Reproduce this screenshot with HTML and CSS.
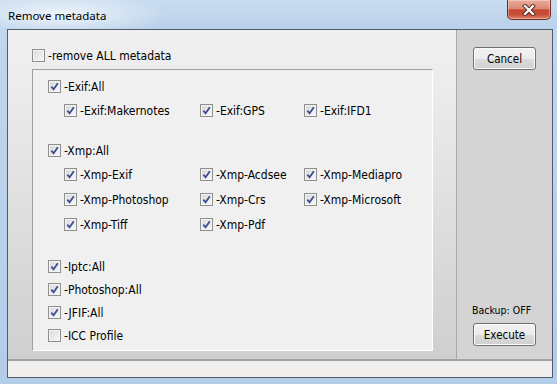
FILE: index.html
```html
<!DOCTYPE html>
<html lang="en">
<head>
    <meta charset="UTF-8">
    <title>Remove metadata</title>
    <link rel="stylesheet" href="styles.css">
</head>
<body>
    <div class="window">
        <div class="titlebar">
            <span class="title">Remove metadata</span>
            <div class="close-btn">
                <svg width="14" height="12" viewBox="0 0 14 12">
                    <path d="M3 2 L11 10 M11 2 L3 10" stroke="#4a2a24" stroke-width="4" stroke-linecap="square"/>
                    <path d="M3 2 L11 10 M11 2 L3 10" stroke="#ffffff" stroke-width="2.2" stroke-linecap="square"/>
                </svg>
            </div>
        </div>
        <div class="frame">
            <div class="client">
                <div class="main">
                    <div class="left-panel">
                        <div class="row top-row"><span class="cb"></span>-remove ALL metadata</div>
                        <div class="group-box">
                            <div class="section">
                                <div class="row"><span class="cb on"><svg viewBox="0 0 9 9"><path d="M1.3 4.6 L3.6 7.2 L7.8 1.2"/></svg></span>-Exif:All</div>
                                <div class="sub">
                                    <div class="row"><span class="cb on"><svg viewBox="0 0 9 9"><path d="M1.3 4.6 L3.6 7.2 L7.8 1.2"/></svg></span>-Exif:Makernotes</div>
                                    <div class="row"><span class="cb on"><svg viewBox="0 0 9 9"><path d="M1.3 4.6 L3.6 7.2 L7.8 1.2"/></svg></span>-Exif:GPS</div>
                                    <div class="row"><span class="cb on"><svg viewBox="0 0 9 9"><path d="M1.3 4.6 L3.6 7.2 L7.8 1.2"/></svg></span>-Exif:IFD1</div>
                                </div>
                            </div>
                            <div class="section xmp">
                                <div class="row"><span class="cb on"><svg viewBox="0 0 9 9"><path d="M1.3 4.6 L3.6 7.2 L7.8 1.2"/></svg></span>-Xmp:All</div>
                                <div class="sub">
                                    <div class="row"><span class="cb on"><svg viewBox="0 0 9 9"><path d="M1.3 4.6 L3.6 7.2 L7.8 1.2"/></svg></span>-Xmp-Exif</div>
                                    <div class="row"><span class="cb on"><svg viewBox="0 0 9 9"><path d="M1.3 4.6 L3.6 7.2 L7.8 1.2"/></svg></span>-Xmp-Acdsee</div>
                                    <div class="row"><span class="cb on"><svg viewBox="0 0 9 9"><path d="M1.3 4.6 L3.6 7.2 L7.8 1.2"/></svg></span>-Xmp-Mediapro</div>
                                    <div class="row"><span class="cb on"><svg viewBox="0 0 9 9"><path d="M1.3 4.6 L3.6 7.2 L7.8 1.2"/></svg></span>-Xmp-Photoshop</div>
                                    <div class="row"><span class="cb on"><svg viewBox="0 0 9 9"><path d="M1.3 4.6 L3.6 7.2 L7.8 1.2"/></svg></span>-Xmp-Crs</div>
                                    <div class="row"><span class="cb on"><svg viewBox="0 0 9 9"><path d="M1.3 4.6 L3.6 7.2 L7.8 1.2"/></svg></span>-Xmp-Microsoft</div>
                                    <div class="row"><span class="cb on"><svg viewBox="0 0 9 9"><path d="M1.3 4.6 L3.6 7.2 L7.8 1.2"/></svg></span>-Xmp-Tiff</div>
                                    <div class="row"><span class="cb on"><svg viewBox="0 0 9 9"><path d="M1.3 4.6 L3.6 7.2 L7.8 1.2"/></svg></span>-Xmp-Pdf</div>
                                </div>
                            </div>
                            <div class="section misc">
                                <div class="row"><span class="cb on"><svg viewBox="0 0 9 9"><path d="M1.3 4.6 L3.6 7.2 L7.8 1.2"/></svg></span>-Iptc:All</div>
                                <div class="row"><span class="cb on"><svg viewBox="0 0 9 9"><path d="M1.3 4.6 L3.6 7.2 L7.8 1.2"/></svg></span>-Photoshop:All</div>
                                <div class="row"><span class="cb on"><svg viewBox="0 0 9 9"><path d="M1.3 4.6 L3.6 7.2 L7.8 1.2"/></svg></span>-JFIF:All</div>
                                <div class="row"><span class="cb"></span>-ICC Profile</div>
                            </div>
                        </div>
                    </div>
                    <div class="right-panel">
                        <button class="btn">Cancel</button>
                        <div class="spacer"></div>
                        <div class="backup">Backup: OFF</div>
                        <button class="btn">Execute</button>
                    </div>
                </div>
                <div class="statusbar"></div>
            </div>
        </div>
    </div>
</body>
</html>
```

FILE: styles.css
```css
body {
    margin: 0;
    background: #ffffff;
    font-family: Tahoma, "DejaVu Sans Condensed", "Liberation Sans", sans-serif;
    font-size: 12px;
    color: #000;
}
.window {
    width: 557px;
    height: 384px;
    display: flex;
    flex-direction: column;
    background: linear-gradient(to bottom, #c2d7ee, #b3cce8);
}
.titlebar {
    height: 29px;
    display: flex;
    align-items: flex-start;
    background:
        radial-gradient(ellipse 110px 22px at 60px 15px, rgba(255,255,255,0.75), rgba(255,255,255,0)),
        linear-gradient(to bottom, #c9dcf0, #b9d1ea);
}
.title {
    font-family: "Noto Sans", "Open Sans", sans-serif;
    font-size: 11.5px;
    padding: 8px 0 0 8px;
}
.close-btn {
    margin-left: auto;
    margin-right: 6px;
    width: 44px;
    height: 20px;
    box-sizing: border-box;
    border: 1px solid #6d2e22;
    border-top: none;
    border-radius: 0 0 5px 5px;
    background: linear-gradient(to bottom, #e9aa9a 0%, #dc8a75 45%, #c64a31 52%, #c84d33 75%, #dd8062 100%);
    box-shadow: inset 0 0 0 1px rgba(255,255,255,0.35);
    display: flex;
    align-items: center;
    justify-content: center;
}
.frame {
    flex: 1;
    padding: 0 4px 6px 7px;
    display: flex;
}
.client {
    flex: 1;
    border: 1px solid #505c69;
    display: flex;
    flex-direction: column;
    background: #f0f0f0;
}
.main {
    display: flex;
    height: 329px;
}
.left-panel {
    width: 448px;
    background: linear-gradient(to bottom, #f0f0f0 0%, #ebebeb 20%, #cfcfcf 100%);
}
.row {
    height: 13px;
    display: flex;
    align-items: center;
    white-space: nowrap;
}
.top-row {
    margin: 19px 0 0 24px;
}
.cb {
    width: 13px;
    height: 13px;
    box-sizing: border-box;
    flex: none;
    margin-right: 3px;
    border: 1px solid #8e8f8f;
    background: linear-gradient(135deg, #d8d8d8, #f9f9f9);
    box-shadow: inset 0 0 0 1px #f4f4f4;
    display: flex;
    align-items: center;
    justify-content: center;
}
.cb svg {
    width: 9px;
    height: 9px;
}
.cb path {
    fill: none;
    stroke: #3c4f91;
    stroke-width: 1.8;
}
.group-box {
    margin: 7px 0 0 24px;
    width: 401px;
    height: 282px;
    box-sizing: border-box;
    border-top: 1px solid #a0a0a0;
    border-left: 1px solid #a0a0a0;
    border-right: 1px solid #ffffff;
    border-bottom: 1px solid #ffffff;
    background: #f0f0f0;
    padding: 10px 0 0 15px;
}
.sub {
    margin: 11px 0 0 16px;
    display: grid;
    grid-template-columns: 136px 104px auto;
    row-gap: 12px;
}
.xmp {
    margin-top: 27px;
}
.misc {
    margin-top: 29px;
    display: flex;
    flex-direction: column;
    gap: 10px;
}
.right-panel {
    width: 96px;
    box-sizing: border-box;
    border-left: 1px solid #a8a8a8;
    background: #d4d4d4;
    padding: 17px 0 13px 16px;
    display: flex;
    flex-direction: column;
    align-items: flex-start;
}
.spacer {
    flex: 1;
}
.backup {
    height: 13px;
    line-height: 13px;
    font-size: 10.5px;
    margin: 0 0 6px -1px;
}
.btn {
    width: 63px;
    height: 23px;
    box-sizing: border-box;
    border: 1px solid #707070;
    border-radius: 3px;
    background: linear-gradient(to bottom, #f2f2f2 0%, #ebebeb 50%, #dddddd 51%, #cfcfcf 100%);
    box-shadow: inset 0 0 0 1px #fbfbfb;
    font-family: inherit;
    font-size: 11.5px;
    color: #000;
    padding: 0;
}
.statusbar {
    flex: 1;
    border-top: 2px solid #a3a3a3;
    background: #f0efed;
}
```
